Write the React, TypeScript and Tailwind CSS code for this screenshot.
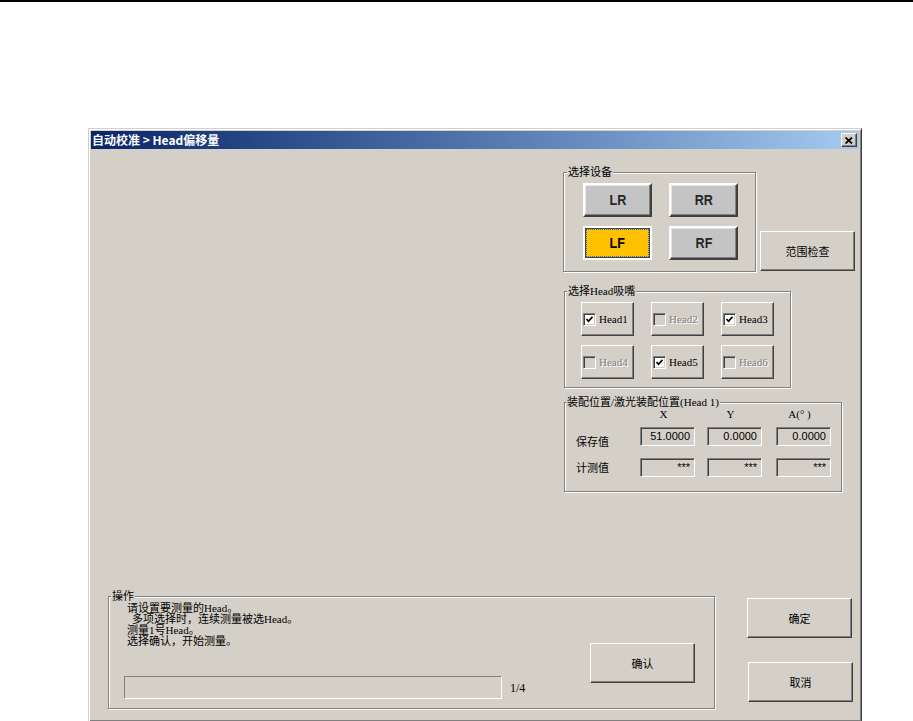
import type { ReactNode } from 'react'

const cjk = "font-['Noto_Sans_CJK_SC',sans-serif]"
const song = "font-['Liberation_Serif','Noto_Sans_CJK_SC',serif]"

function WinButton({ children, className = '' }: { children: ReactNode; className?: string }) {
  return (
    <div
      className={`flex items-center justify-center border border-t-white border-l-white border-r-[#404040] border-b-[#404040] bg-[#d4d0c8] text-[11px] text-black shadow-[inset_-1px_-1px_0_#808080] ${cjk} ${className}`}
    >
      {children}
    </div>
  )
}

function Group({ label, className = '', labelClass = '', children }: { label: ReactNode; className?: string; labelClass?: string; children?: ReactNode }) {
  return (
    <div className={`relative border border-[#808080] shadow-[inset_1px_1px_0_#fff,1px_1px_0_#fff] ${className}`}>
      <span className={`absolute top-[-8px] bg-[#d4d0c8] px-[1px] text-[11px] leading-[14px] text-black ${song} ${labelClass}`}>{label}</span>
      {children}
    </div>
  )
}

function DeviceButton({ label, active = false }: { label: string; active?: boolean }) {
  if (active) {
    return (
      <div className="flex h-[34px] items-center justify-center border-2 border-white bg-[#ffc000] shadow-[inset_0_0_0_1px_#404040] outline-1 outline-dotted outline-[#2f6fc8] -outline-offset-4">
        <span className="inline-block scale-x-[0.84] font-['Liberation_Sans',sans-serif] text-[15px] font-bold text-black">{label}</span>
      </div>
    )
  }
  return (
    <div className="flex h-[34px] items-center justify-center border-2 border-t-white border-l-white border-r-[#404040] border-b-[#404040] bg-[#c4c4c4] shadow-[inset_-1px_-1px_0_#808080,inset_1px_1px_0_#e6e6e6]">
      <span className="inline-block scale-x-[0.84] font-['Liberation_Sans',sans-serif] text-[15px] font-bold text-[#262626]">{label}</span>
    </div>
  )
}

function HeadToggle({ label, checked = false, disabled = false }: { label: string; checked?: boolean; disabled?: boolean }) {
  return (
    <div className="flex h-[34px] items-center border border-t-white border-l-white border-r-[#404040] border-b-[#404040] bg-[#d4d0c8] pl-[1px] shadow-[inset_-1px_-1px_0_#808080]">
      <div
        className={`flex h-[13px] w-[13px] items-center justify-center border border-t-[#808080] border-l-[#808080] border-r-white border-b-white shadow-[inset_1px_1px_0_#404040,inset_-1px_-1px_0_#d4d0c8] ${disabled ? 'bg-[#d4d0c8]' : 'bg-white'}`}
      >
        {checked && (
          <svg width="7" height="7" viewBox="0 0 7 7">
            <path d="M0.5 3 L2.5 5.2 L6.5 0.8" fill="none" stroke="#000" strokeWidth="1.7" />
          </svg>
        )}
      </div>
      <span
        className={`ml-[3px] text-[11px] ${song} ${disabled ? 'text-[#808080] [text-shadow:1px_1px_0_#fff]' : 'text-black'}`}
      >
        {label}
      </span>
    </div>
  )
}

function Field({ value, className = '' }: { value: string; className?: string }) {
  return (
    <div
      className={`flex h-[19px] w-[55px] items-start justify-end border border-t-[#808080] border-l-[#808080] border-r-white border-b-white bg-[#d4d0c8] pr-[4px] pt-[1px] font-['Liberation_Sans',sans-serif] text-[11px] leading-[14px] text-black shadow-[inset_1px_1px_0_#404040,inset_-1px_-1px_0_#d4d0c8] ${className}`}
    >
      {value}
    </div>
  )
}

export default function App() {
  return (
    <div className="relative h-[721px] w-[913px] overflow-hidden bg-white">
      <div className="h-[2px] bg-black" />

      <div className="ml-[88px] mt-[126px] h-[594px] w-[774px] border border-t-[#d4d0c8] border-l-[#d4d0c8] border-r-[#404040] border-b-[#404040] bg-[#d4d0c8] p-[2px] shadow-[inset_1px_1px_0_#fff,inset_-1px_-1px_0_#808080]">
        {/* title bar */}
        <div className="flex h-[18px] items-center justify-between bg-linear-to-r from-[#0a246a] to-[#a6caf0] pl-[1px] pr-[2px]">
          <span className={`text-[12px] font-bold leading-[14px] text-white ${cjk}`}>自动校准 &gt; Head偏移量</span>
          <div className="flex h-[14px] w-[16px] items-center justify-center border border-t-white border-l-white border-r-[#404040] border-b-[#404040] bg-[#d4d0c8] shadow-[inset_-1px_-1px_0_#808080]">
            <svg width="8" height="7" viewBox="0 0 8 7">
              <path d="M0.5 0.5 L7 6.5 M7 0.5 L0.5 6.5" stroke="#000" strokeWidth="1.8" fill="none" />
            </svg>
          </div>
        </div>

        {/* body */}
        <div className="flex flex-col">
          <div className="flex pl-[472px] pt-[23px]">
            <div className="flex flex-col">
              <div className="flex items-start">
                <Group label="选择设备" labelClass="left-[3px]" className="h-[100px] w-[193px]">
                  <div className="grid grid-cols-[69px_69px] gap-x-[17px] gap-y-[9px] pl-[19px] pt-[10px]">
                    <DeviceButton label="LR" />
                    <DeviceButton label="RR" />
                    <DeviceButton label="LF" active />
                    <DeviceButton label="RF" />
                  </div>
                </Group>
                <WinButton className="ml-[4px] mt-[59px] h-[40px] w-[95px]">范围检查</WinButton>
              </div>

              <Group label="选择Head吸嘴" labelClass="left-[2px]" className="ml-[1px] mt-[19px] h-[97px] w-[227px]">
                <div className="grid grid-cols-[53px_53px_53px] gap-x-[17px] gap-y-[9px] pl-[16px] pt-[10px]">
                  <HeadToggle label="Head1" checked />
                  <HeadToggle label="Head2" disabled />
                  <HeadToggle label="Head3" checked />
                  <HeadToggle label="Head4" disabled />
                  <HeadToggle label="Head5" checked />
                  <HeadToggle label="Head6" disabled />
                </div>
              </Group>

              <Group label="装配位置/激光装配位置(Head 1)" labelClass="left-[1px]" className="ml-[1px] mt-[14px] h-[90px] w-[278px]">
                <div className="pl-[11px] pt-[5px]">
                  <div className={`flex text-[11px] leading-[12px] text-black ${song}`}>
                    <div className="w-[60px]" />
                    <div className="w-[55px] text-center">X</div>
                    <div className="ml-[12px] w-[55px] text-center">Y</div>
                    <div className="ml-[14px] w-[55px] text-center">A(° )</div>
                  </div>
                  <div className="mt-[7px] flex">
                    <div className={`h-[19px] w-[64px] pt-[5px] text-[11px] leading-[19px] text-black ${cjk}`}>保存值</div>
                    <Field value="51.0000" />
                    <Field value="0.0000" className="ml-[12px]" />
                    <Field value="0.0000" className="ml-[14px]" />
                  </div>
                  <div className="mt-[12px] flex">
                    <div className={`w-[64px] text-[11px] leading-[19px] text-black ${cjk}`}>计测值</div>
                    <Field value="***" />
                    <Field value="***" className="ml-[12px]" />
                    <Field value="***" className="ml-[14px]" />
                  </div>
                </div>
              </Group>
            </div>
          </div>

          <div className="mt-[104px] flex pl-[17px]">
            <Group label="操作" labelClass="left-[2px]" className="flex h-[113px] w-[607px]">
              <div className="flex w-[481px] flex-col pb-[9px] pl-[15px] pt-[6px]">
                <div className={`pl-[3px] text-[11px] leading-[11px] text-black ${song}`}>
                  <div>请设置要测量的Head。</div>
                  <div className="pl-[5px]">多项选择时，连续测量被选Head。</div>
                  <div>测量1号Head。</div>
                  <div>选择确认，开始测量。</div>
                </div>
                <div className="mt-auto flex items-center">
                  <div className="h-[23px] w-[378px] border border-t-[#808080] border-l-[#808080] border-r-white border-b-white" />
                  <span className={`ml-[8px] text-[12px] text-black ${song}`}>1/4</span>
                </div>
              </div>
              <WinButton className="mt-[46px] h-[40px] w-[105px]">确认</WinButton>
            </Group>

            <div className="ml-[32px] flex flex-col">
              <WinButton className="mt-[2px] h-[40px] w-[105px]">确定</WinButton>
              <WinButton className="ml-[1px] mt-[24px] h-[40px] w-[105px]">取消</WinButton>
            </div>
          </div>
        </div>
      </div>
    </div>
  )
}
